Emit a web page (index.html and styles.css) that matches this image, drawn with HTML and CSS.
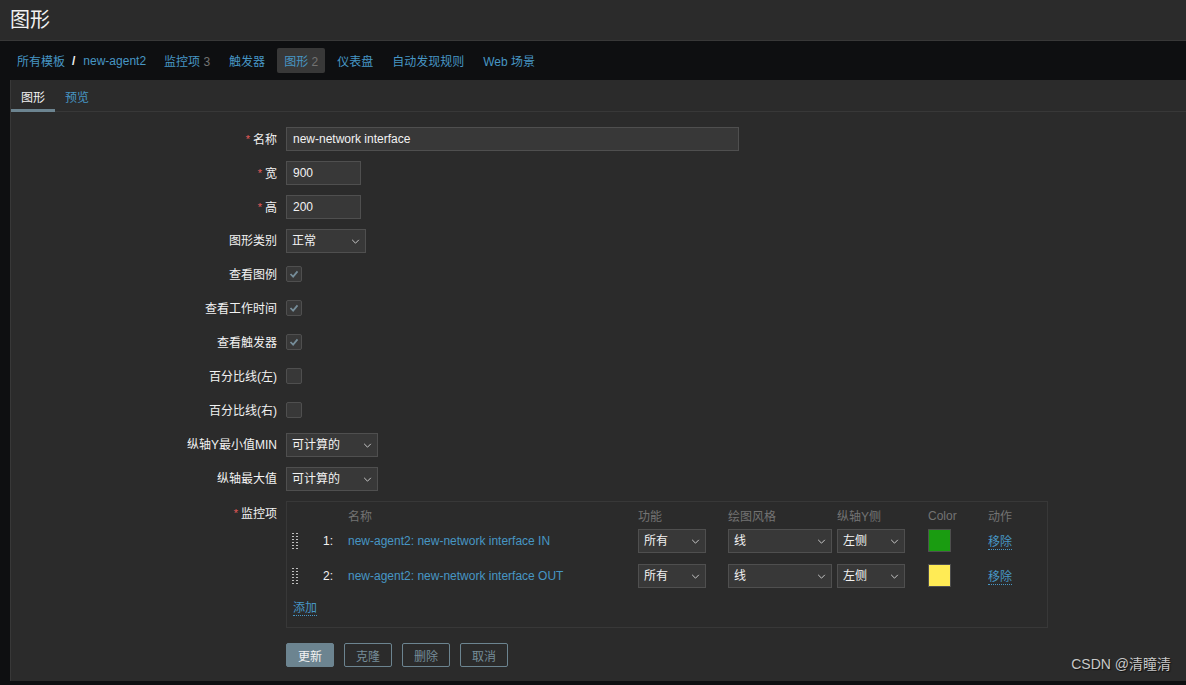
FILE: index.html
```html
<!DOCTYPE html>
<html>
<head>
<meta charset="utf-8">
<link rel="stylesheet" href="styles.css">
</head>
<body>
<header class="page-header"><h1>图形</h1></header>
<nav class="nav">
  <a class="nav-link">所有模板</a><span class="sep">/</span><a class="nav-link host">new-agent2</a>
  <a class="nav-link item first">监控项 <span class="count">3</span></a>
  <a class="nav-link item">触发器</a>
  <a class="nav-link item selected">图形 <span class="count">2</span></a>
  <a class="nav-link item">仪表盘</a>
  <a class="nav-link item">自动发现规则</a>
  <a class="nav-link item">Web 场景</a>
</nav>
<main class="panel">
  <div class="tabs">
    <span class="tab active">图形</span>
    <span class="tab">预览</span>
  </div>
  <div class="form">
    <label class="lbl"><span class="req">*</span>名称</label>
    <div class="field"><div class="input wide">new-network interface</div></div>

    <label class="lbl"><span class="req">*</span>宽</label>
    <div class="field"><div class="input small">900</div></div>

    <label class="lbl"><span class="req">*</span>高</label>
    <div class="field"><div class="input small">200</div></div>

    <label class="lbl">图形类别</label>
    <div class="field"><div class="select s-type">正常<svg class="chev" viewBox="0 0 10 6"><polyline points="1,1 5,5 9,1"/></svg></div></div>

    <label class="lbl">查看图例</label>
    <div class="field"><span class="cb"><svg viewBox="0 0 16 16"><polyline points="4,8 7,11 12,5"/></svg></span></div>

    <label class="lbl">查看工作时间</label>
    <div class="field"><span class="cb"><svg viewBox="0 0 16 16"><polyline points="4,8 7,11 12,5"/></svg></span></div>

    <label class="lbl">查看触发器</label>
    <div class="field"><span class="cb"><svg viewBox="0 0 16 16"><polyline points="4,8 7,11 12,5"/></svg></span></div>

    <label class="lbl">百分比线(左)</label>
    <div class="field"><span class="cb"></span></div>

    <label class="lbl">百分比线(右)</label>
    <div class="field"><span class="cb"></span></div>

    <label class="lbl">纵轴Y最小值MIN</label>
    <div class="field"><div class="select s-calc">可计算的<svg class="chev" viewBox="0 0 10 6"><polyline points="1,1 5,5 9,1"/></svg></div></div>

    <label class="lbl">纵轴最大值</label>
    <div class="field"><div class="select s-calc">可计算的<svg class="chev" viewBox="0 0 10 6"><polyline points="1,1 5,5 9,1"/></svg></div></div>

    <label class="lbl lbl-top"><span class="req">*</span>监控项</label>
    <div class="field field-items">
      <div class="items">
        <div class="irow ihead">
          <span></span><span></span><span>名称</span><span>功能</span><span>绘图风格</span><span>纵轴Y侧</span><span>Color</span><span>动作</span>
        </div>
        <div class="irow">
          <span class="drag"></span><span class="num">1:</span><span><a class="link">new-agent2: new-network interface IN</a></span>
          <div class="select s-func">所有<svg class="chev" viewBox="0 0 10 6"><polyline points="1,1 5,5 9,1"/></svg></div>
          <div class="select s-style">线<svg class="chev" viewBox="0 0 10 6"><polyline points="1,1 5,5 9,1"/></svg></div>
          <div class="select s-func">左侧<svg class="chev" viewBox="0 0 10 6"><polyline points="1,1 5,5 9,1"/></svg></div>
          <span class="swatch green"></span>
          <span><a class="link dotted">移除</a></span>
        </div>
        <div class="irow">
          <span class="drag"></span><span class="num">2:</span><span><a class="link">new-agent2: new-network interface OUT</a></span>
          <div class="select s-func">所有<svg class="chev" viewBox="0 0 10 6"><polyline points="1,1 5,5 9,1"/></svg></div>
          <div class="select s-style">线<svg class="chev" viewBox="0 0 10 6"><polyline points="1,1 5,5 9,1"/></svg></div>
          <div class="select s-func">左侧<svg class="chev" viewBox="0 0 10 6"><polyline points="1,1 5,5 9,1"/></svg></div>
          <span class="swatch yellow"></span>
          <span><a class="link dotted">移除</a></span>
        </div>
        <div class="add"><a class="link dotted">添加</a></div>
      </div>
    </div>

    <span></span>
    <div class="field buttons">
      <button class="btn primary">更新</button>
      <button class="btn">克隆</button>
      <button class="btn">删除</button>
      <button class="btn">取消</button>
    </div>
  </div>
  <div class="watermark">CSDN @清瞳清</div>
</main>
</body>
</html>
```
FILE: styles.css
```css
* { box-sizing: border-box; }
html, body { margin: 0; padding: 0; }
body {
  background: #0e0f11;
  font-family: "Liberation Sans", Arial, "Noto Sans CJK SC", sans-serif;
  font-size: 12px;
  color: #f2f2f2;
  width: 1186px;
  height: 685px;
  overflow: hidden;
}
.page-header {
  height: 41px;
  background: #2b2b2b;
  border-bottom: 1px solid #383838;
  padding-left: 10px;
  display: flex;
  align-items: center;
}
.page-header h1 {
  margin: 0;
  font-size: 20px;
  font-weight: normal;
  color: #f2f2f2;
  margin-top: -4px;
}
.nav {
  height: 39px;
  display: flex;
  align-items: center;
  padding-left: 17px;
}
.nav-link { color: #4796c4; white-space: nowrap; }
.sep { color: #f2f2f2; margin: 0 8px 0 7px; font-weight: bold; }
.nav-link.item { margin-left: 19px; }
.nav-link.item.first { margin-left: 18px; }
.nav-link.selected {
  background: #383838;
  padding: 4px 7px;
  margin-left: 12px;
  margin-right: -7px;
  border-radius: 2px;
}
.count { color: #737373; }
.panel {
  margin-left: 10px;
  height: 601px;
  background: #2b2b2b;
  border-left: 1px solid #383838;
  position: relative;
}
.tabs {
  height: 32px;
  border-bottom: 1px solid #383838;
  display: flex;
  align-items: stretch;
}
.tab {
  color: #4796c4;
  padding: 8px 10px 0 10px;
  font-size: 12px;
}
.tab.active {
  color: #f2f2f2;
  border-bottom: 3px solid #6c8490;
  margin-bottom: -1px;
}
.form {
  display: grid;
  grid-template-columns: 266px auto;
  column-gap: 9px;
  row-gap: 10px;
  padding-top: 15px;
  align-items: center;
}
.lbl {
  text-align: right;
  white-space: nowrap;
  line-height: 24px;
  height: 24px;
}
.lbl-top { align-self: start; }
.req { color: #e45959; margin-right: 3px; font-size: 11px; vertical-align: 1px; }
.field { display: flex; align-items: center; height: 24px; }
.field-items { height: auto; }
.input {
  height: 24px;
  background: #383838;
  border: 1px solid #4f4f4f;
  padding: 0 6px;
  line-height: 22px;
  color: #f2f2f2;
}
.input.wide { width: 453px; }
.input.small { width: 75px; }
.select {
  height: 24px;
  background: #383838;
  border: 1px solid #4f4f4f;
  padding: 0 0 0 5px;
  line-height: 22px;
  color: #f2f2f2;
  position: relative;
  white-space: nowrap;
}
.chev {
  position: absolute;
  right: 5px;
  top: 9px;
  width: 9px;
  height: 5px;
  fill: none;
  stroke: #c8c8c8;
  stroke-width: 1.2;
}
.s-type { width: 80px; }
.s-calc { width: 92px; }
.s-func { width: 68px; }
.s-style { width: 104px; }
.cb {
  width: 16px;
  height: 16px;
  background: #383838;
  border: 1px solid #4f4f4f;
  border-radius: 2px;
  display: inline-flex;
  margin-top: -3px;
}
.cb svg {
  width: 14px;
  height: 14px;
  fill: none;
  stroke: #768d99;
  stroke-width: 2;
}
.items {
  width: 762px;
  height: 127px;
  border: 1px solid #383838;
  padding: 5px 0 0 5px;
}
.irow {
  display: grid;
  grid-template-columns: 26px 15px 305px 90px 109px 91px 60px auto;
  align-items: center;
  height: 35px;
}
.irow > :nth-child(3) { padding-left: 15px; }
.irow.ihead { height: 16px; color: #737373; }
.drag {
  width: 7px;
  height: 18px;
  background-image: radial-gradient(circle, #bfbfbf 0.9px, transparent 1.1px);
  background-size: 4px 3px;
  background-position: -1px 0;
}
.num { text-align: right; }
.link { color: #4796c4; white-space: nowrap; }
.dotted { border-bottom: 1px dotted #4796c4; }
.swatch {
  width: 23px;
  height: 23px;
  border: 1px solid #4f4f4f;
  display: block;
}
.swatch.green { background: #1a9c11; }
.swatch.yellow { background: #ffeb55; }
.add { padding-top: 5px; padding-left: 1px; }
.buttons { gap: 10px; margin-top: 5px; }
.btn {
  height: 24px;
  width: 48px;
  border: 1px solid #6c8490;
  background: transparent;
  color: #768d99;
  border-radius: 2px;
  font-family: inherit;
  font-size: 12px;
  padding: 0;
}
.btn.primary { background: #6c8490; color: #f2f2f2; }
.watermark {
  position: absolute;
  right: 15px;
  bottom: 8px;
  font-size: 14px;
  color: #c8c8c8;
  text-shadow: 1px 1px 1px #111;
}
```
